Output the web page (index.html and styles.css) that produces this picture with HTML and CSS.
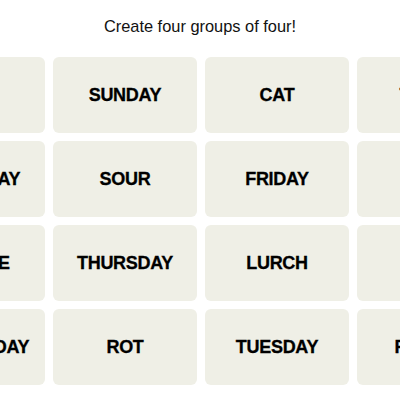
FILE: index.html
```html
<!DOCTYPE html>
<html lang="en">

<head>
    <meta charset="UTF-8">
    <meta name="viewport" content="width=device-width, initial-scale=1.0">
    <title>Connections</title>
    <link rel="stylesheet" href="styles.css">
</head>

<body>
    <div class="game">
        <p class="prompt">Create four groups of four!</p>
        <div class="board-wrap">
            <div class="board">
                <!-- row 1 -->
                <button class="tile">DOG</button>
                <button class="tile">SUNDAY</button>
                <button class="tile">CAT</button>
                <button class="tile">TOAST</button>
                <!-- row 2 -->
                <button class="tile">SATURDAY</button>
                <button class="tile">SOUR</button>
                <button class="tile">FRIDAY</button>
                <button class="tile">MOLD</button>
                <!-- row 3 -->
                <button class="tile">CURDLE</button>
                <button class="tile">THURSDAY</button>
                <button class="tile">LURCH</button>
                <button class="tile">MUSH</button>
                <!-- row 4 -->
                <button class="tile">WEDNESDAY</button>
                <button class="tile">ROT</button>
                <button class="tile">TUESDAY</button>
                <button class="tile">FESTER</button>
            </div>
        </div>
    </div>
</body>

</html>
```

FILE: styles.css
```css
body {
    margin: 0;
    padding: 0;
    background-color: #fff;
    font-family: "Liberation Sans", Arial, sans-serif;
    overflow: hidden;
}

.game {
    width: 400px;
    height: 400px;
    overflow: hidden;
}

.prompt {
    margin: 0;
    padding-top: 16px;
    height: 41px;
    text-align: center;
    font-size: 16.4px;
    line-height: 20px;
    color: #121212;
}

.board-wrap {
    display: flex;
    justify-content: center;
}

.board {
    flex: none;
    width: 600px;
    display: grid;
    grid-template-columns: repeat(4, 144px);
    grid-auto-rows: 76px;
    gap: 8px;
    transform: translateX(1px);
}

.tile {
    border: none;
    border-radius: 6px;
    background-color: #efefe6;
    color: #000;
    font-family: "Liberation Sans", Arial, sans-serif;
    font-size: 18px;
    font-weight: bold;
    letter-spacing: -0.3px;
    -webkit-text-stroke: 0.3px #000;
    cursor: pointer;
    padding: 0;
}
```
